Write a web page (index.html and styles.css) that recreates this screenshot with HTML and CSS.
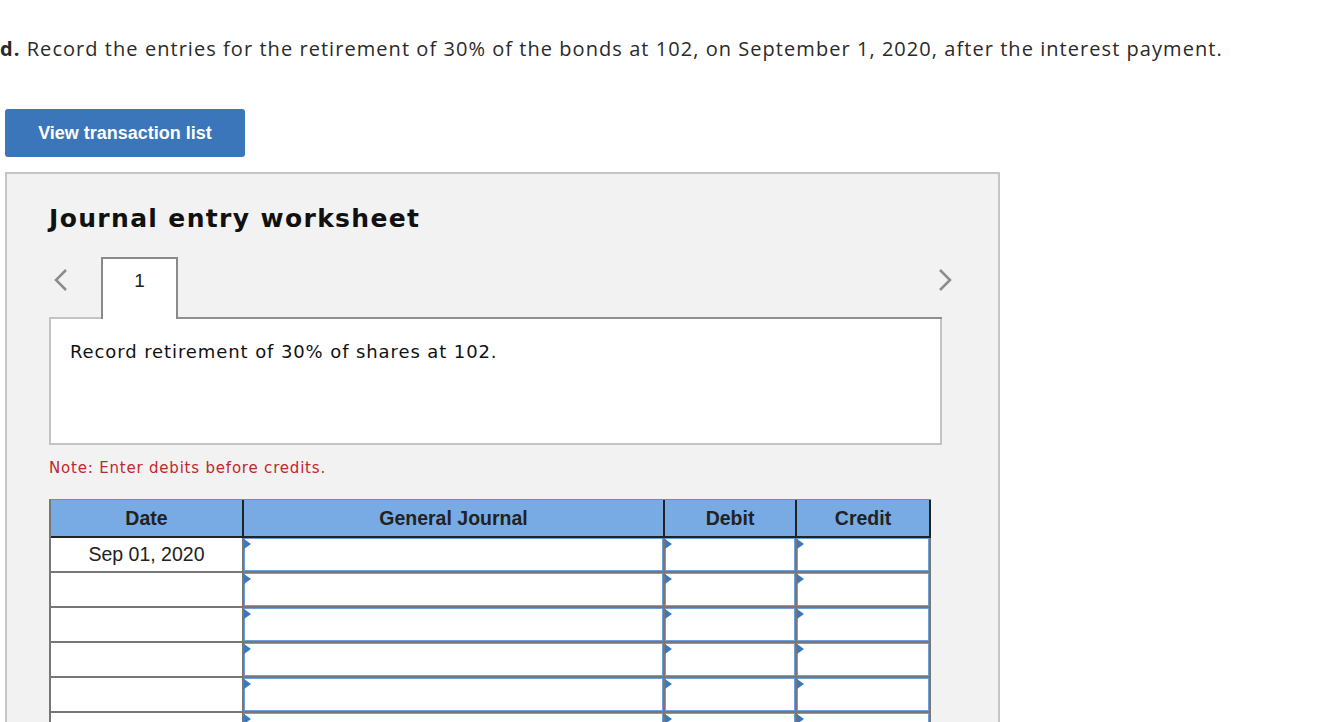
FILE: index.html
```html
<!DOCTYPE html>
<html lang="en">

<head>
    <meta charset="UTF-8">
    <meta name="viewport" content="width=device-width, initial-scale=1.0">
    <link rel="stylesheet" href="styles.css">
</head>

<body>

    <p class="question"><b>d.</b> Record the entries for the retirement of 30% of the bonds at 102, on September 1, 2020, after the interest payment.</p>

    <button class="btn-list" type="button">View transaction list</button>

    <div class="worksheet">
        <h2 class="ws-title">Journal entry worksheet</h2>

        <div class="ws-nav">
            <div class="nav-prev">
                <svg width="14" height="24" viewBox="0 0 14 24"><polyline points="12,2 2,12 12,22" fill="none" stroke="#8c8c8c" stroke-width="2.5"/></svg>
            </div>
            <div class="ws-tab">1</div>
            <div class="nav-rest">
                <svg class="nav-next" width="14" height="24" viewBox="0 0 14 24"><polyline points="2,2 12,12 2,22" fill="none" stroke="#8c8c8c" stroke-width="2.5"/></svg>
            </div>
        </div>

        <div class="ws-desc">Record retirement of 30% of shares at 102.</div>

        <p class="ws-note">Note: Enter debits before credits.</p>

        <table class="journal">
            <thead>
                <tr>
                    <th class="c-date">Date</th>
                    <th class="c-acct">General Journal</th>
                    <th class="c-num">Debit</th>
                    <th class="c-num2">Credit</th>
                </tr>
            </thead>
            <tbody id="rows"></tbody>
        </table>
    </div>

    <script>
        const rows = document.getElementById('rows');
        for (let i = 0; i < 8; i++) {
            const tr = document.createElement('tr');
            const date = i === 0 ? 'Sep 01, 2020' : '';
            tr.innerHTML = `<td class="date">${date}</td>` +
                '<td><div class="field"></div></td>' +
                '<td><div class="field"></div></td>' +
                '<td><div class="field"></div></td>';
            rows.appendChild(tr);
        }
    </script>

</body>

</html>
```

FILE: styles.css
```css
* {
    margin: 0;
    padding: 0;
    box-sizing: border-box;
}

body {
    margin: 0;
    font-family: Arial, "Liberation Sans", sans-serif;
    color: #222;
}

.question {
    padding-top: 37px;
    font-family: "Open Sans", sans-serif;
    font-size: 20px;
    line-height: 24px;
    letter-spacing: 1.05px;
    color: #2a2a2a;
    white-space: nowrap;
}

.btn-list {
    display: block;
    margin: 48px 0 0 5px;
    width: 240px;
    height: 48px;
    border: none;
    border-radius: 3px;
    background-color: #3a76b9;
    color: white;
    font-family: "Liberation Sans", Arial, sans-serif;
    font-weight: bold;
    font-size: 18px;
}

.worksheet {
    margin: 15px 0 0 5px;
    width: 995px;
    border: 2px solid #c6c6c6;
    background-color: #f2f2f2;
    padding: 30px 0 0 42px;
}

.ws-title {
    font-family: "DejaVu Sans", Verdana, sans-serif;
    font-size: 25px;
    line-height: 30px;
    letter-spacing: 1.35px;
    color: #111;
}

.ws-nav {
    display: flex;
    width: 893px;
    height: 60px;
    margin-top: 23px;
}

.nav-prev {
    width: 52px;
    padding: 11px 0 0 5px;
}

.ws-tab {
    position: relative;
    z-index: 1;
    width: 77px;
    height: 62px;
    margin-bottom: -2px;
    border: 2px solid #8a8a8a;
    border-bottom: none;
    background-color: white;
    text-align: center;
    padding-top: 12px;
    font-size: 19px;
    line-height: 20px;
}

.nav-rest {
    position: relative;
    z-index: 1;
    flex: 1;
    height: 62px;
    margin-bottom: -2px;
    border-bottom: 2px solid #8f8f8f;
    display: flex;
    justify-content: flex-end;
    align-items: flex-start;
}

.nav-next {
    margin: 11px -10px 0 0;
}

.ws-desc {
    width: 893px;
    height: 128px;
    border: 2px solid #c4c4c4;
    background-color: white;
    padding: 22px 0 0 19px;
    font-family: "DejaVu Sans", Verdana, sans-serif;
    font-size: 18px;
    line-height: 22px;
    letter-spacing: 0.9px;
    color: #111;
}

.ws-note {
    margin-top: 14px;
    font-family: "DejaVu Sans", Verdana, sans-serif;
    font-size: 15px;
    line-height: 18px;
    letter-spacing: 0.8px;
    color: #c1272d;
}

.journal {
    margin-top: 22px;
    width: 882px;
    table-layout: fixed;
    border-collapse: separate;
    border-spacing: 0;
    border-left: 2px solid #777;
    border-top: 1px solid #888;
    font-size: 19.5px;
}

.journal th {
    height: 38px;
    background-color: #78abe3;
    border-right: 2px solid #222;
    border-bottom: 2px solid #222;
    font-weight: bold;
    color: #222;
    text-align: center;
}

.c-date {
    width: 193px;
}

.c-acct {
    width: 421px;
}

.c-num {
    width: 132px;
}

.c-num2 {
    width: 134px;
}

.journal td {
    height: 35px;
    padding: 0;
    background-color: white;
    border-right: 2px solid #777;
    border-bottom: 2px solid #777;
}

.journal td.date {
    text-align: center;
    color: #222;
}

.field {
    position: relative;
    height: 33px;
    border: 1px solid #6f9fd8;
}

.field::before {
    content: "";
    position: absolute;
    top: 0;
    left: -1px;
    border-left: 7px solid #3b78c0;
    border-top: 5px solid transparent;
    border-bottom: 5px solid transparent;
}
```
